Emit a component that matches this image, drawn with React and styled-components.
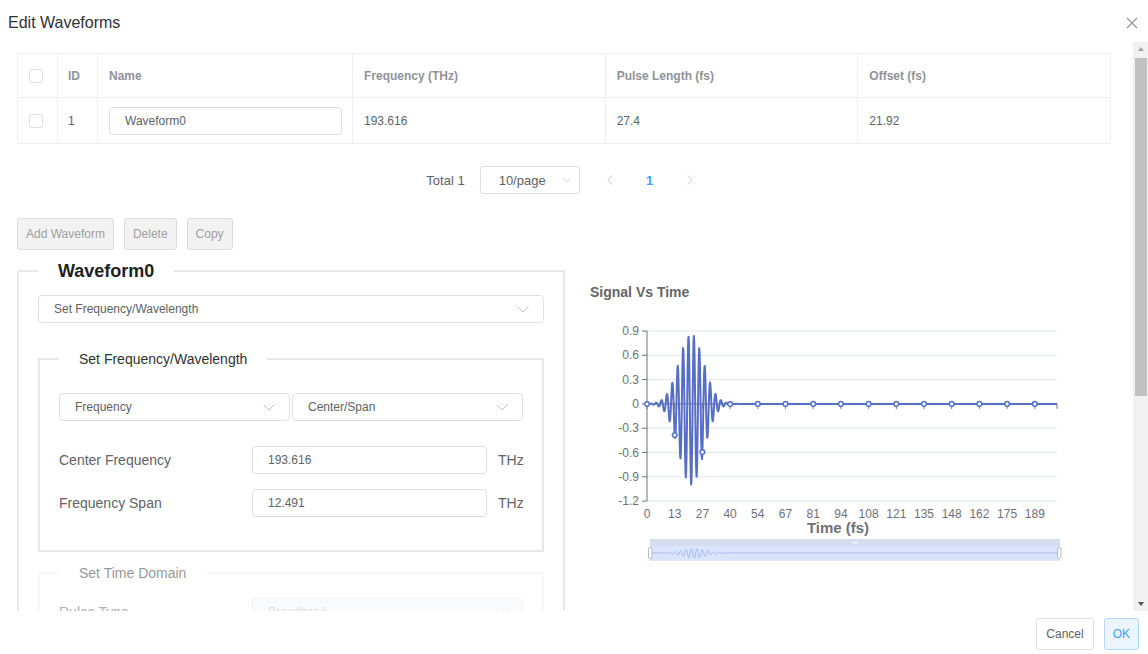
import React from "react";
import styled, { createGlobalStyle } from "styled-components";

const GlobalStyle = createGlobalStyle`
  html, body { margin: 0; padding: 0; background: #fff; }
  body { font-family: "Liberation Sans", Arial, sans-serif; color: #606266; }
  * { box-sizing: border-box; }
`;

// chart geometry (page coordinates)
const X0 = 647;
const XEND = 1057;
const XSTEP = 27.7;
const YZ = 402.9;
const YU = 81;
const XC = 691.2;

const wave = (x) => {
  const d = x - XC;
  return -(0.93 * Math.cos((2 * Math.PI * d) / 5.4) + 0.07) * Math.exp(-(d * d) / (2 * 12.3 * 12.3));
};

const xLabels = ["0", "13", "27", "40", "54", "67", "81", "94", "108", "121", "135", "148", "162", "175", "189"];
const yLabels = ["0.9", "0.6", "0.3", "0", "-0.3", "-0.6", "-0.9", "-1.2"];

const linePoints = (() => {
  const p = [];
  for (let x = X0; x <= XEND; x += 0.35) p.push(`${x.toFixed(2)},${(YZ - wave(x) * YU).toFixed(2)}`);
  p.push(`${XEND},${YZ}`);
  return p.join(" ");
})();

const previewPoints = (() => {
  const p = [];
  for (let x = 651; x <= 1059; x += 0.5) p.push(`${x.toFixed(2)},${(552 - wave(x - 3) * 5).toFixed(2)}`);
  return p.join(" ");
})();

const Dialog = styled.div`
  width: 100%;
  height: 100vh;
  display: flex;
  flex-direction: column;
  background: #fff;
`;

const Header = styled.div`
  height: 42px;
  flex: none;
  display: flex;
  align-items: center;
  justify-content: space-between;
  padding: 3px 10px 0 8px;
`;

const Title = styled.div`
  font-size: 16px;
  line-height: 24px;
  color: #303133;
`;

const BodyWrap = styled.div`
  flex: 1;
  min-height: 0;
  display: flex;
`;

const Body = styled.div`
  flex: 1;
  min-width: 0;
  overflow: hidden;
  padding: 11px 22px 0 17px;
`;

const Scrollbar = styled.div`
  width: 15px;
  flex: none;
  display: flex;
  flex-direction: column;
  background: #f1f1f1;
`;

const ScrollButton = styled.div`
  height: 15px;
  flex: none;
  display: flex;
  align-items: center;
  justify-content: center;

  &::before {
    content: "";
    border-left: 3.5px solid transparent;
    border-right: 3.5px solid transparent;
    ${(p) =>
      p.$down
        ? "border-top: 4px solid #505050; margin-top: 1px;"
        : "border-bottom: 4px solid #a3a3a3; margin-top: -1px;"}
  }
`;

const ScrollTrack = styled.div`
  flex: 1;
  padding: 1px 1px 0 2px;
`;

const ScrollThumb = styled.div`
  height: 338px;
  background: #c1c1c1;
`;

const Table = styled.div`
  display: grid;
  grid-template-columns: 40px 40px 255px 1fr 1fr 1fr;
  border-top: 1px solid #ebeef5;
  border-left: 1px solid #ebeef5;
`;

const Cell = styled.div`
  height: ${(p) => (p.$head ? 44 : 46)}px;
  display: flex;
  align-items: center;
  padding: 0 10px 0 ${(p) => (p.$pl ? p.$pl : 10)}px;
  border-right: 1px solid #ebeef5;
  border-bottom: 1px solid #ebeef5;
  font-size: 12px;
  font-weight: ${(p) => (p.$head ? 700 : 400)};
  color: ${(p) => (p.$head ? "#909399" : "#606266")};
`;

const Checkbox = styled.span`
  width: 14px;
  height: 14px;
  border: 1px solid #dcdfe6;
  border-radius: 2px;
  background: #fff;
`;

const TextInput = styled.div`
  flex: 1;
  height: ${(p) => p.$h || 28}px;
  display: flex;
  align-items: center;
  padding: 0 15px;
  border: 1px solid #dcdfe6;
  border-radius: 4px;
  font-size: 12px;
  color: #606266;
  background: #fff;
`;

const Pagination = styled.div`
  margin-top: 22px;
  display: flex;
  align-items: center;
  justify-content: center;
  height: 28px;
  padding-left: 8px;
  font-size: 13px;
  color: #606266;
`;

const Total = styled.span`
  margin-right: 15px;
`;

const PageSelect = styled.div`
  width: 100px;
  height: 28px;
  display: flex;
  align-items: center;
  justify-content: space-between;
  padding: 0 8px 0 18px;
  border: 1px solid #dcdfe6;
  border-radius: 3px;
  margin-right: 10px;
`;

const PageBtn = styled.div`
  width: 30px;
  height: 28px;
  margin: 0 5px;
  display: flex;
  align-items: center;
  justify-content: center;
  font-size: 13px;
  font-weight: 700;
  color: ${(p) => (p.$active ? "#409eff" : "#c0c4cc")};
`;

const Toolbar = styled.div`
  margin-top: 24px;
  display: flex;
  gap: 10px;
`;

const GrayButton = styled.button`
  height: 32px;
  padding: 0 8px;
  border: 1px solid #dcdcdc;
  border-radius: 3px;
  background: #f2f2f2;
  color: #a0a0a0;
  font-family: inherit;
  font-size: 12px;
`;

const Split = styled.div`
  margin-top: 10px;
  display: flex;
  align-items: flex-start;
`;

const Fieldset = styled.fieldset`
  width: ${(p) => (p.$w ? `${p.$w}px` : "auto")};
  margin: ${(p) => p.$mt || 0}px 0 0;
  padding: ${(p) => p.$pt}px 19px ${(p) => p.$pb}px;
  border: 2px solid ${(p) => (p.$disabled ? "#f0f0f2" : "#e8e8ec")};
  min-width: 0;
  opacity: ${(p) => (p.$disabled ? 0.5 : 1)};
`;

const Legend = styled.legend`
  padding: 0 20px;
  font-size: ${(p) => p.$size}px;
  line-height: ${(p) => p.$lh}px;
  font-weight: ${(p) => (p.$bold ? 700 : 400)};
  color: ${(p) => (p.$bold ? "#1f1f1f" : "#303133")};
`;

const SelectBox = styled.div`
  flex: 1;
  height: 28px;
  display: flex;
  align-items: center;
  justify-content: space-between;
  padding: 0 14px 0 ${(p) => p.$pl || 15}px;
  border: 1px solid ${(p) => (p.$disabled ? "#e4e7ed" : "#dcdfe6")};
  border-radius: 4px;
  background: ${(p) => (p.$disabled ? "#f5f7fa" : "#fff")};
  font-size: 12px;
  color: ${(p) => (p.$disabled ? "#c0c4cc" : "#606266")};
`;

const SelectRow = styled.div`
  display: flex;
  gap: 2px;
`;

const FormRow = styled.div`
  display: flex;
  align-items: center;
  margin-top: ${(p) => p.$mt}px;
`;

const Label = styled.div`
  width: 193px;
  flex: none;
  font-size: 14px;
  color: #606266;
`;

const Unit = styled.div`
  width: 36px;
  flex: none;
  padding-left: 11px;
  font-size: 14px;
  color: #606266;
`;

const ChartCol = styled.div`
  flex: 1;
  min-width: 0;
`;

const ChartTitle = styled.div`
  margin-top: 22px;
  padding-left: 25px;
  font-size: 14px;
  line-height: 20px;
  font-weight: 700;
  color: #666;
`;

const ChartSvg = styled.svg`
  display: block;
  margin-top: 4px;
  font-family: "Liberation Sans", Arial, sans-serif;
`;

const Footer = styled.div`
  height: 43px;
  flex: none;
  display: flex;
  justify-content: flex-end;
  align-items: flex-start;
  gap: 10px;
  padding: 7px 9px 0 0;
`;

const FooterButton = styled.button`
  height: 32px;
  padding: 0 ${(p) => (p.$primary ? 8 : 9)}px;
  border-radius: 3px;
  border: 1px solid ${(p) => (p.$primary ? "#b3d8ff" : "#dcdfe6")};
  background: ${(p) => (p.$primary ? "#ecf5ff" : "#fff")};
  color: ${(p) => (p.$primary ? "#409eff" : "#606266")};
  font-family: inherit;
  font-size: 12px;
`;

const Chevron = ({ w = 12, color = "#c0c4cc" }) => (
  <svg width={w} height={w * 0.55} viewBox="0 0 12 6.6" fill="none">
    <polyline points="0.5,0.5 6,6 11.5,0.5" stroke={color} strokeWidth="1" />
  </svg>
);

const Arrow = ({ dir }) => (
  <svg width="6" height="10" viewBox="0 0 6 10" fill="none">
    <polyline
      points={dir === "left" ? "5,0.5 0.8,5 5,9.5" : "1,0.5 5.2,5 1,9.5"}
      stroke="#c0c4cc"
      strokeWidth="1"
    />
  </svg>
);

const Field = ({ label, value, unit, mt }) => (
  <FormRow $mt={mt}>
    <Label>{label}</Label>
    <TextInput>{value}</TextInput>
    <Unit>{unit}</Unit>
  </FormRow>
);

const Chart = () => {
  const axis = "#6e7079";
  return (
    <ChartSvg width="546" height="270">
      <g transform="translate(-565,-305)">
        {yLabels.map((l, i) => {
          const y = 330 + i * 24.3;
          return (
            <g key={l}>
              <line x1={X0} x2={XEND} y1={y} y2={y} stroke="#e0e6f1" strokeWidth="1" />
              <line x1={X0 - 5} x2={X0} y1={y} y2={y} stroke={axis} strokeWidth="1" />
              <text x={X0 - 8} y={y + 4} fontSize="12" fill={axis} textAnchor="end">
                {l}
              </text>
            </g>
          );
        })}
        <line x1={X0} x2={X0} y1={330} y2={500.1} stroke={axis} strokeWidth="1" />
        <line x1={X0} x2={XEND} y1={YZ} y2={YZ} stroke={axis} strokeWidth="1" />
        {xLabels.map((l, i) => {
          const x = X0 + i * XSTEP;
          return (
            <g key={l}>
              <line x1={x} x2={x} y1={YZ} y2={YZ + 5} stroke={axis} strokeWidth="1" />
              <text x={x} y={517} fontSize="12" fill={axis} textAnchor="middle">
                {l}
              </text>
            </g>
          );
        })}
        <line x1={XEND} x2={XEND} y1={YZ} y2={YZ + 5} stroke={axis} strokeWidth="1" />
        <text x={838} y={532} fontSize="15" fontWeight="700" fill={axis} textAnchor="middle">
          Time (fs)
        </text>
        <polyline points={linePoints} fill="none" stroke="#5470c6" strokeWidth="2" strokeLinejoin="round" />
        {xLabels.map((l, i) => {
          const x = X0 + i * XSTEP;
          return (
            <circle key={l} cx={x} cy={YZ - wave(x) * YU} r="2.3" fill="#fff" stroke="#5470c6" strokeWidth="1.5" />
          );
        })}
        <rect x={650} y={538} width={410} height={7} fill="#d5ddee" />
        <rect x={650} y={545} width={410} height={15} fill="#dae4fb" />
        <g stroke="#fff" strokeWidth="0.8">
          <line x1={853} x2={853} y1={540} y2={543} />
          <line x1={855} x2={855} y1={540} y2={543} />
          <line x1={857} x2={857} y1={540} y2={543} />
        </g>
        <polyline points={previewPoints} fill="none" stroke="#9fb6ef" strokeWidth="0.9" />
        <rect x={648.5} y={546.5} width={3.5} height={11} rx={1.5} fill="#fff" stroke="#a3abbb" strokeWidth="0.8" />
        <rect x={1057.5} y={546.5} width={3.5} height={11} rx={1.5} fill="#fff" stroke="#a3abbb" strokeWidth="0.8" />
      </g>
    </ChartSvg>
  );
};

const headers = ["Name", "Frequency (THz)", "Pulse Length (fs)", "Offset (fs)"];

export default function App() {
  return (
    <Dialog>
      <GlobalStyle />
      <Header>
        <Title>Edit Waveforms</Title>
        <svg width="12" height="12" viewBox="0 0 12 12">
          <path d="M1 1 L11 11 M11 1 L1 11" stroke="#909399" strokeWidth="1.1" />
        </svg>
      </Header>

      <BodyWrap>
        <Body>
          <Table>
            <Cell $head $pl={11}>
              <Checkbox />
            </Cell>
            <Cell $head>ID</Cell>
            {headers.map((h) => (
              <Cell $head key={h} $pl={11}>
                {h}
              </Cell>
            ))}
            <Cell $pl={11}>
              <Checkbox />
            </Cell>
            <Cell>1</Cell>
            <Cell $pl={11}>
              <TextInput $h={28}>Waveform0</TextInput>
            </Cell>
            <Cell $pl={11}>193.616</Cell>
            <Cell $pl={11}>27.4</Cell>
            <Cell $pl={11}>21.92</Cell>
          </Table>

          <Pagination>
            <Total>Total 1</Total>
            <PageSelect>
              10/page
              <Chevron w={8} />
            </PageSelect>
            <PageBtn>
              <Arrow dir="left" />
            </PageBtn>
            <PageBtn $active>1</PageBtn>
            <PageBtn>
              <Arrow dir="right" />
            </PageBtn>
          </Pagination>

          <Toolbar>
            <GrayButton>Add Waveform</GrayButton>
            <GrayButton>Delete</GrayButton>
            <GrayButton>Copy</GrayButton>
          </Toolbar>

          <Split>
            <Fieldset $w={548} $pt={13} $pb={20}>
              <Legend $size={18} $lh={22} $bold>
                Waveform0
              </Legend>
              <SelectBox>
                Set Frequency/Wavelength
                <Chevron />
              </SelectBox>

              <Fieldset $mt={28} $pt={26} $pb={33}>
                <Legend $size={14} $lh={16}>
                  Set Frequency/Wavelength
                </Legend>
                <SelectRow>
                  <SelectBox>
                    Frequency
                    <Chevron />
                  </SelectBox>
                  <SelectBox>
                    Center/Span
                    <Chevron />
                  </SelectBox>
                </SelectRow>
                <Field label="Center Frequency" value="193.616" unit="THz" mt={25} />
                <Field label="Frequency Span" value="12.491" unit="THz" mt={15} />
              </Fieldset>

              <Fieldset $mt={13} $pt={17} $pb={33} $disabled>
                <Legend $size={14} $lh={16}>
                  Set Time Domain
                </Legend>
                <FormRow $mt={0}>
                  <Label>Rules Type</Label>
                  <SelectBox $disabled>
                    Broadband
                    <Chevron />
                  </SelectBox>
                </FormRow>
                <Field label="Pulse Length" value="27.4" unit="fs" mt={15} />
                <Field label="Offset" value="21.92" unit="fs" mt={15} />
              </Fieldset>
            </Fieldset>

            <ChartCol>
              <ChartTitle>Signal Vs Time</ChartTitle>
              <Chart />
            </ChartCol>
          </Split>
        </Body>

        <Scrollbar>
          <ScrollButton />
          <ScrollTrack>
            <ScrollThumb />
          </ScrollTrack>
          <ScrollButton $down />
        </Scrollbar>
      </BodyWrap>

      <Footer>
        <FooterButton>Cancel</FooterButton>
        <FooterButton $primary>OK</FooterButton>
      </Footer>
    </Dialog>
  );
}
